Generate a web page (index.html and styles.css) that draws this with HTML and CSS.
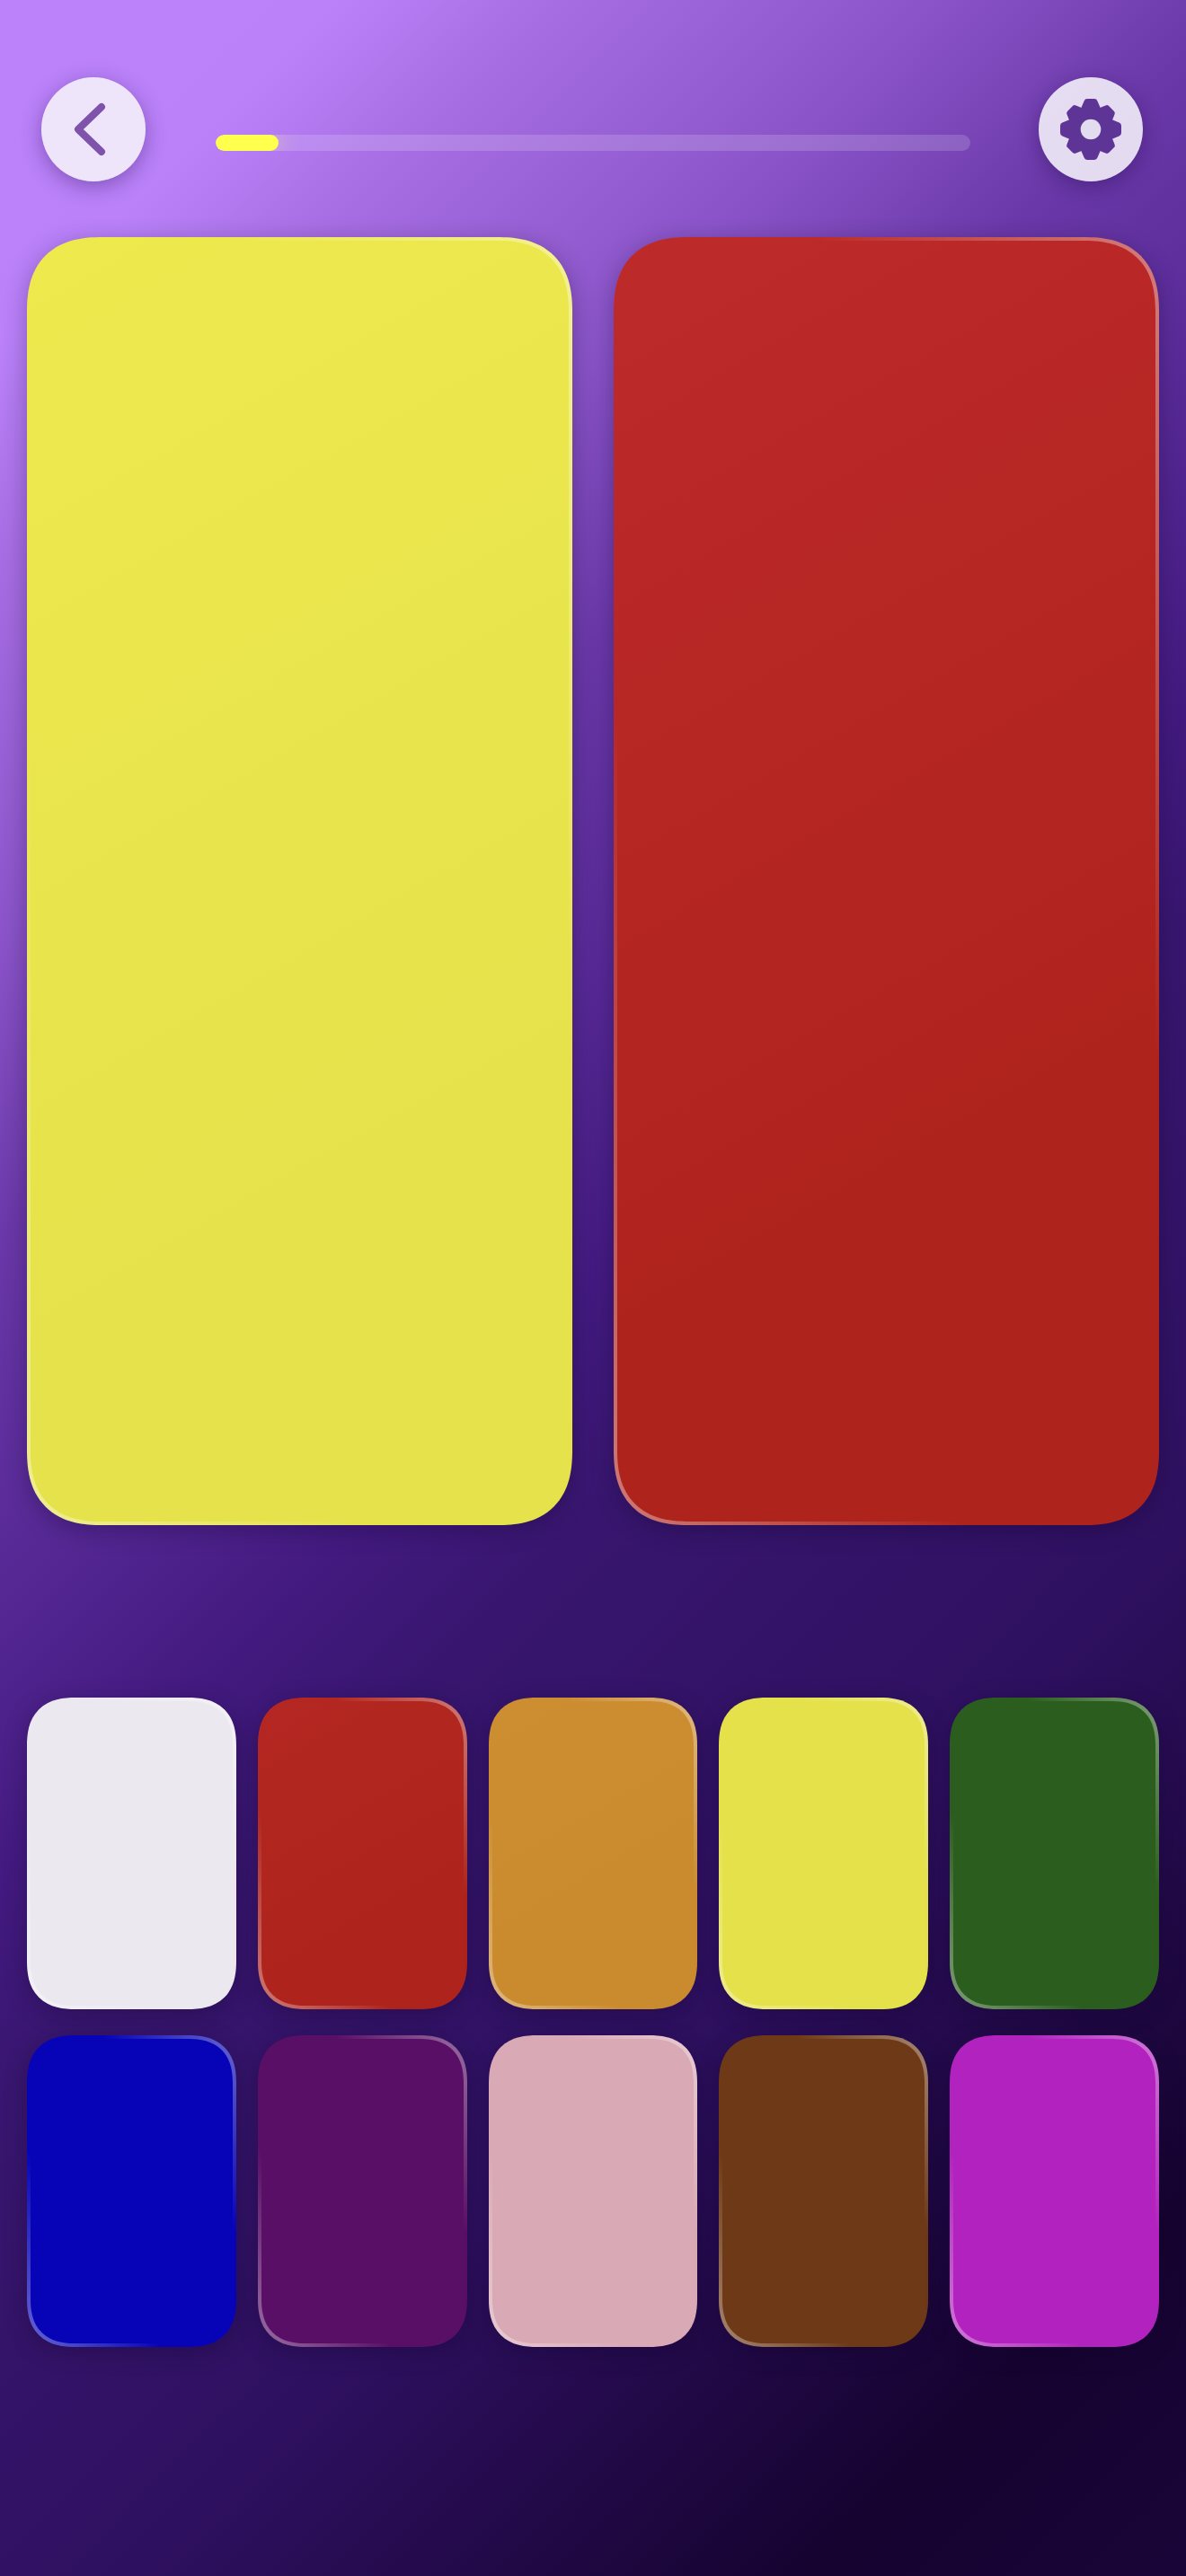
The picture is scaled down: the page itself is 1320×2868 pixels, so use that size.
FILE: index.html
```html
<!doctype html>
<html>
<head>
<meta charset="utf-8">
<meta name="viewport" content="width=device-width,initial-scale=1">
<title>Colour match</title>
<link rel="stylesheet" href="styles.css">
</head>

<body>
<div id="game">
    <div class="top">
        <a href="javascript:;" class="round" aria-label="Back">
            <svg width="116" height="116" viewBox="0 0 116 116">
                <path class="chevron" d="M67 33 L41 58 L67 83" />
            </svg>
        </a>
        <div class="progress"><div class="progress_fill"></div></div>
        <a href="javascript:;" class="round" aria-label="Settings">
            <svg width="116" height="116" viewBox="-58 -58 116 116">
                <defs>
                    <path id="tooth" d="M-11.5 -22 L-7.4 -31.6 Q-6.6 -34 -4 -34 L4 -34 Q6.6 -34 7.4 -31.6 L11.5 -22 Z" />
                </defs>
                <g class="gear">
                    <circle r="25.5" />
                    <use href="#tooth" />
                    <use href="#tooth" transform="rotate(45) scale(.96)" />
                    <use href="#tooth" transform="rotate(90)" />
                    <use href="#tooth" transform="rotate(135) scale(.96)" />
                    <use href="#tooth" transform="rotate(180)" />
                    <use href="#tooth" transform="rotate(225) scale(.96)" />
                    <use href="#tooth" transform="rotate(270)" />
                    <use href="#tooth" transform="rotate(315) scale(.96)" />
                </g>
                <circle class="gear_hole" r="11.3" />
            </svg>
        </a>
    </div>

    <div class="pair">
        <div class="card c_yellow_big"></div>
        <div class="card c_red_big"></div>
    </div>

    <div class="palette">
        <div class="card tile c_white"></div>
        <div class="card tile c_red"></div>
        <div class="card tile c_orange"></div>
        <div class="card tile c_yellow"></div>
        <div class="card tile c_green"></div>
        <div class="card tile c_blue"></div>
        <div class="card tile c_purple"></div>
        <div class="card tile c_pink"></div>
        <div class="card tile c_brown"></div>
        <div class="card tile c_magenta"></div>
    </div>
</div>
</body>
</html>
```

FILE: styles.css
```css
html,body,div,a{margin:0; padding:0;}
body{
	height:2868px;
	overflow:hidden;
	font-family:'Liberation Sans', sans-serif;
	background:linear-gradient(135deg, #bb82fa 0%, #ba81f9 9%, #a66de2 15%, #8a54c8 25%, #6a38a8 33%, #5b2c9a 40%, #431a80 50%, #38166f 56%, #2e1060 72%, #160330 90%, #1a0538 100%);
}
#game{
	height:2868px;
	box-sizing:border-box;
	padding:86px 30px 0;
}

/* top bar */
.top{
	display:flex;
	align-items:flex-start;
	height:116px;
	padding:0 18px 0 16px;
}
.round{
	display:block;
	flex:none;
	width:116px;
	height:116px;
	border-radius:50%;
	background:rgba(245,243,250,.88);
	box-shadow:0 6px 22px rgba(30,10,70,.35);
}
.round svg{display:block;}
.chevron{
	fill:none;
	stroke:#7f52ac;
	stroke-width:8;
	stroke-linecap:round;
	stroke-linejoin:round;
}
.gear{fill:#5e3496;}
.gear_hole{fill:#e2dcee;}
.progress{
	flex:1;
	height:18px;
	margin:64px 76px 0 78px;
	border-radius:9px;
	overflow:hidden;
	background:rgba(255,255,255,.16);
}
.progress_fill{
	width:70px;
	height:18px;
	border-radius:9px;
	background:#ffff4d;
	box-shadow:0 0 24px rgba(255,240,110,.5);
}

/* cards: fill on padding box, light rim shows through the border */
.card{
	--c:#fff;
	--top:var(--c);
	--fill:linear-gradient(150deg, var(--top), var(--c) 70%);
	box-sizing:border-box;
	border:4px solid transparent;
	border-radius:84px;
	corner-shape:superellipse(1.3);
	background:
		var(--fill) padding-box,
		linear-gradient(to top right, rgba(255,255,255,.4) 0%, rgba(255,255,255,.2) 16%, rgba(255,255,255,0) 32%, rgba(255,255,255,0) 68%, rgba(255,255,255,.2) 84%, rgba(255,255,255,.4) 100%) border-box,
		var(--fill) border-box;
	box-shadow:0 6px 26px rgba(15,0,40,.3);
}
.pair{
	display:grid;
	grid-template-columns:607px 607px;
	justify-content:space-between;
	height:1434px;
	margin-top:62px;
}
.palette{
	display:grid;
	grid-template-columns:repeat(5, 1fr);
	grid-template-rows:347px 347px;
	gap:29px 24px;
	margin-top:192px;
}
.tile{border-radius:54px;}

.c_yellow_big{--top:#eee94d; --c:#e5e24b;}
.c_red_big{--top:#bd2a2a; --c:#af231d;}
.c_white{--c:#ebe9ef;}
.c_red{--top:#b42722; --c:#ae241c;}
.c_orange{--top:#cd8d31; --c:#ca8b2f;}
.c_yellow{--c:#e4e14a;}
.c_green{--c:#2b5d1e;}
.c_blue{--c:#0604b6;}
.c_purple{--c:#590f66;}
.c_pink{--c:#d9a9b6;}
.c_brown{--c:#6d3916;}
.c_magenta{--c:#b222be;}
```
